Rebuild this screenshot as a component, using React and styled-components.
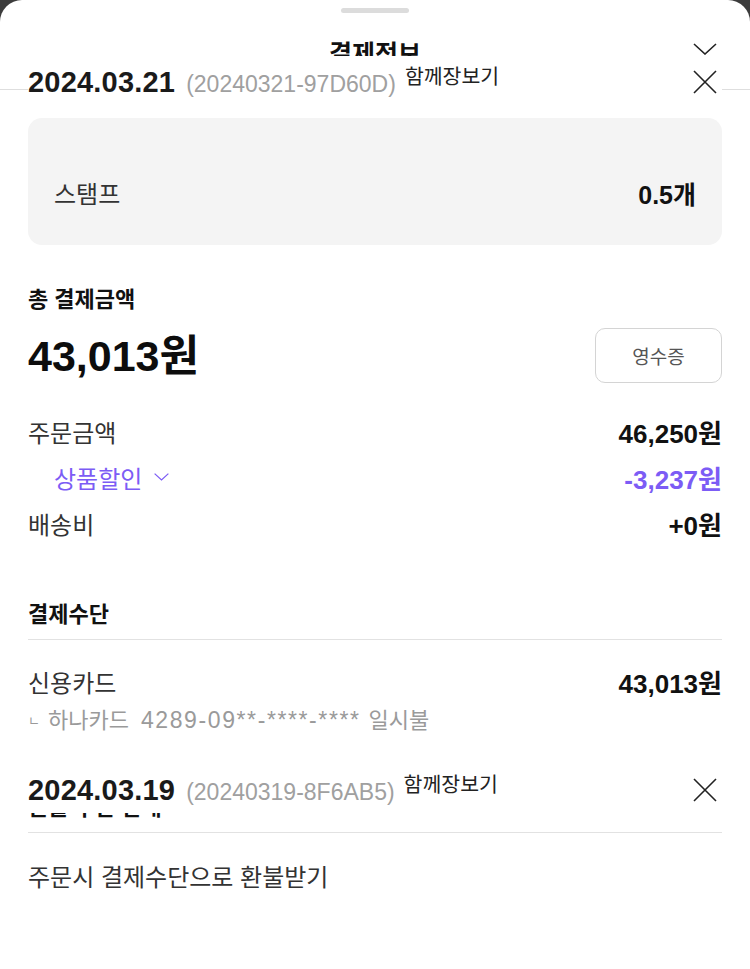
import styled, { createGlobalStyle } from 'styled-components';

const GlobalStyle = createGlobalStyle`
  html, body {
    margin: 0;
    padding: 0;
    background: #3c3c3c;
  }
  body {
    font-family: "Liberation Sans", "Noto Sans CJK KR", sans-serif;
    color: #222;
  }
`;

const Sheet = styled.div`
  position: relative;
  width: 750px;
  min-height: 969px;
  background: #fff;
  border-radius: 22px 22px 0 0;
  overflow: hidden;
`;

const HandleBar = styled.div`
  display: flex;
  justify-content: center;
  padding-top: 8px;
  & > span {
    width: 68px;
    height: 5px;
    border-radius: 3px;
    background: #dcdcdc;
  }
`;

const TitleRow = styled.div`
  position: relative;
  height: 77px;
  box-sizing: border-box;
  padding-top: 28px;
  border-bottom: 1px solid #dedede;
  text-align: center;
  font-size: 25px;
  line-height: 26px;
  font-weight: 700;
  color: #111;
`;

const Collapse = styled.button`
  position: absolute;
  top: 30px;
  right: 33px;
  padding: 0;
  border: 0;
  background: none;
  display: flex;
`;

const OrderBar = styled.div`
  position: absolute;
  left: ${p => p.$inset}px;
  right: ${p => p.$inset}px;
  top: ${p => p.$top}px;
  height: ${p => p.$height}px;
  background: #fff;
  display: flex;
  align-items: center;
  justify-content: space-between;
`;

const OrderInfo = styled.div`
  display: flex;
  align-items: baseline;
`;

const OrderDate = styled.span`
  font-size: 29px;
  line-height: 34px;
  font-weight: 700;
  color: #1a1a1a;
  letter-spacing: 0.2px;
`;

const OrderId = styled.span`
  margin-left: 11px;
  font-size: 23px;
  color: #a0a0a0;
`;

const Together = styled.span`
  align-self: flex-start;
  margin-left: 9px;
  margin-top: 0;
  font-size: 20.5px;
  line-height: 24px;
  color: #222;
`;

const CloseBtn = styled.button`
  margin-right: 5px;
  padding: 0;
  border: 0;
  background: none;
  display: flex;
`;

const Content = styled.div`
  padding: 0 28px;
`;

const StampBox = styled.div`
  margin-top: 28px;
  height: 127px;
  box-sizing: border-box;
  padding: 22px 26px 0;
  border-radius: 14px;
  background: #f4f4f4;
  display: flex;
  align-items: center;
  justify-content: space-between;
  font-size: 24px;
  color: #333;
  & b {
    font-size: 25px;
    color: #111;
  }
`;

const SectionLabel = styled.div`
  margin-top: ${p => p.$mt || 0}px;
  font-size: 22px;
  line-height: 30px;
  font-weight: 700;
  color: #111;
  ${p => p.$underline && `
    padding-bottom: 9px;
    border-bottom: 1px solid #e2e2e2;
  `}
`;

const TotalRow = styled.div`
  margin-top: 13px;
  display: flex;
  align-items: center;
  justify-content: space-between;
`;

const TotalAmount = styled.div`
  font-size: 43px;
  line-height: 54px;
  font-weight: 700;
  color: #0d0d0d;
`;

const ReceiptBtn = styled.button`
  width: 127px;
  height: 55px;
  border: 1px solid #d4d4d4;
  border-radius: 10px;
  background: #fff;
  font-family: inherit;
  font-size: 19px;
  color: #555;
`;

const DetailList = styled.div`
  margin-top: 25px;
`;

const Row = styled.div`
  display: flex;
  align-items: center;
  justify-content: space-between;
  height: ${p => p.$h || 46}px;
  font-size: 24px;
  color: ${p => (p.$accent ? '#7c5cf5' : '#333')};
  padding-left: ${p => (p.$indent ? 26 : 0)}px;
  & b {
    font-size: 26px;
    color: ${p => (p.$accent ? '#7c5cf5' : '#111')};
  }
`;

const Label = styled.span`
  display: flex;
  align-items: center;
  gap: 12px;
`;

const PayRow = styled(Row)`
  margin-top: 25px;
`;

const CardNote = styled.div`
  margin-top: 9px;
  font-size: 22px;
  line-height: 28px;
  color: #9a9a9a;
  & small {
    font-size: 13px;
    margin-right: 8px;
    vertical-align: 3px;
  }
  & em {
    font-style: normal;
    font-size: 23px;
    letter-spacing: 1.6px;
    margin: 0 8px 0 12px;
  }
`;

const RefundSection = styled.div`
  position: relative;
  margin-top: 58px;
`;

const RefundText = styled.div`
  margin-top: 30px;
  font-size: 24px;
  line-height: 30px;
  color: #333;
`;

const XIcon = () => (
  <svg width="24" height="24" viewBox="0 0 24 24" fill="none" stroke="#222" strokeWidth="1.6">
    <path d="M1 1 L23 23 M23 1 L1 23" />
  </svg>
);

const ChevronDown = ({ size = 24, color = '#222', width = 1.6 }) => (
  <svg width={size} height={size / 2} viewBox="0 0 24 12" fill="none" stroke={color} strokeWidth={width}>
    <path d="M1 1 L12 11 L23 1" />
  </svg>
);

const OrderHeader = ({ date, id, top, height, inset }) => (
  <OrderBar $top={top} $height={height} $inset={inset}>
    <OrderInfo>
      <OrderDate>{date}</OrderDate>
      <OrderId>({id})</OrderId>
      <Together>함께장보기</Together>
    </OrderInfo>
    <CloseBtn>
      <XIcon />
    </CloseBtn>
  </OrderBar>
);

export default function App() {
  return (
    <>
      <GlobalStyle />
      <Sheet>
        <HandleBar>
          <span />
        </HandleBar>
        <TitleRow>
          결제정보
          <Collapse>
            <ChevronDown />
          </Collapse>
        </TitleRow>
        <OrderHeader date="2024.03.21" id="20240321-97D60D" top={56} height={52} inset={28} />

        <Content>
          <StampBox>
            <span>스탬프</span>
            <b>0.5개</b>
          </StampBox>

          <SectionLabel $mt={40}>총 결제금액</SectionLabel>
          <TotalRow>
            <TotalAmount>43,013원</TotalAmount>
            <ReceiptBtn>영수증</ReceiptBtn>
          </TotalRow>

          <DetailList>
            <Row>
              <span>주문금액</span>
              <b>46,250원</b>
            </Row>
            <Row $accent $indent>
              <Label>
                상품할인
                <ChevronDown size={15} color="#7c5cf5" width={2} />
              </Label>
              <b>-3,237원</b>
            </Row>
            <Row>
              <span>배송비</span>
              <b>+0원</b>
            </Row>
          </DetailList>

          <SectionLabel $mt={54} $underline>
            결제수단
          </SectionLabel>
          <PayRow $h={32}>
            <span>신용카드</span>
            <b>43,013원</b>
          </PayRow>
          <CardNote>
            <small>ㄴ</small>하나카드<em>4289-09**-****-****</em>일시불
          </CardNote>

          <RefundSection>
            <SectionLabel $underline>환불 수단 안내</SectionLabel>
            <OrderHeader date="2024.03.19" id="20240319-8F6AB5" top={-26} height={46} inset={0} />
          </RefundSection>
          <RefundText>주문시 결제수단으로 환불받기</RefundText>
        </Content>
      </Sheet>
    </>
  );
}
